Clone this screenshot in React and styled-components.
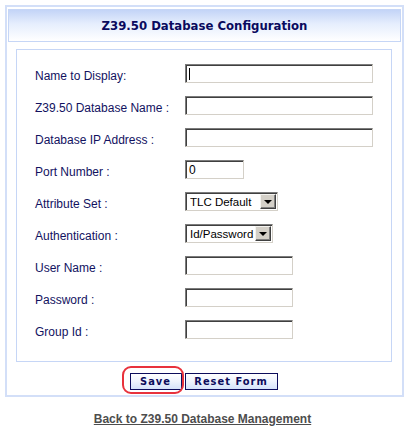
import React from 'react'
import styled, { createGlobalStyle } from 'styled-components'

const GlobalStyle = createGlobalStyle`
  body {
    margin: 0;
    background: #ffffff;
    font-family: "Liberation Sans", Arial, sans-serif;
  }
`

const Page = styled.div`
  width: 411px;
  padding-top: 5px;
`

const Frame = styled.div`
  margin-left: 5px;
  width: 393px;
  border: 2px solid #d3dff8;
  padding: 2px 1px 5px 1px;
`

const Header = styled.div`
  height: 31px;
  border: 1px solid #c6d6f6;
  background: linear-gradient(to bottom, #c3d4f7 0%, #e6eefd 45%, #ffffff 100%);
  display: flex;
  align-items: center;
  justify-content: center;
`

const Title = styled.h1`
  margin: 0;
  font-family: "DejaVu Sans Condensed", "DejaVu Sans", sans-serif;
  font-weight: bold;
  font-size: 13px;
  color: #0a0a5e;
`

const Panel = styled.div`
  margin: 7px 9px 0 8px;
  border: 1px solid #c6d6f6;
  padding: 14px 18px 23px 18px;
  display: grid;
  grid-template-columns: 150px 1fr;
  grid-auto-rows: 18px;
  row-gap: 14px;
  align-items: center;
`

const Label = styled.label`
  font-size: 12px;
  color: #12125f;
  white-space: nowrap;
  padding-top: 6px;
`

const Field = styled.div`
  display: flex;
  align-items: center;
  height: 18px;
`

const TextBox = styled.div`
  box-sizing: border-box;
  width: ${({ $w }) => $w}px;
  height: 19px;
  border: 1px solid;
  border-color: #7c7c7c #d4d0c8 #d4d0c8 #7c7c7c;
  box-shadow: inset 1px 1px 0 #404040;
  background: #fff;
  padding: 2px 0 0 3px;
  font-size: 12px;
  color: #000;
  position: relative;
`

const Caret = styled.span`
  position: absolute;
  left: 3px;
  top: 3px;
  width: 1px;
  height: 12px;
  background: #000;
`

const SelectBox = styled.div`
  box-sizing: border-box;
  width: ${({ $w }) => $w}px;
  height: 19px;
  border: 1px solid;
  border-color: #7c7c7c #d4d0c8 #d4d0c8 #7c7c7c;
  box-shadow: inset 1px 1px 0 #404040;
  background: #fff;
  display: flex;
  align-items: center;
  padding: 1px 1px 0 4px;
  font-size: 11.5px;
  color: #000;
`

const SelectValue = styled.span`
  flex: 1;
  min-width: 0;
  overflow: hidden;
  white-space: nowrap;
`

const ArrowButton = styled.span`
  box-sizing: border-box;
  flex-shrink: 0;
  width: 16px;
  height: 15px;
  background: #d4d0c8;
  border: 1px solid;
  border-color: #f4f3ef #404040 #404040 #f4f3ef;
  box-shadow: inset -1px -1px 0 #808080;
  display: flex;
  align-items: center;
  justify-content: center;
  &::after {
    content: '';
    border-left: 4px solid transparent;
    border-right: 4px solid transparent;
    border-top: 4px solid #000;
    margin-top: 1px;
  }
`

const ButtonRow = styled.div`
  display: flex;
  justify-content: center;
  gap: 3px;
  margin-top: 11px;
  padding-right: 2px;
`

const Highlight = styled.span`
  position: relative;
  display: inline-flex;
  &::before {
    content: '';
    position: absolute;
    left: -8px;
    right: -2px;
    top: -7px;
    bottom: -4px;
    border: 2px solid #e8323c;
    border-radius: 9px;
    pointer-events: none;
  }
`

const Button = styled.button`
  box-sizing: border-box;
  width: ${({ $w }) => $w}px;
  height: 17px;
  border: 1px solid #0c0c5c;
  background: linear-gradient(to bottom, #ffffff 0%, #eef3fd 50%, #d5e2fa 100%);
  font-family: "DejaVu Sans Condensed", "DejaVu Sans", sans-serif;
  font-weight: bold;
  font-size: 11px;
  letter-spacing: 1px;
  color: #0c0c5c;
  padding: 0;
  line-height: 15px;
`

const Footer = styled.div`
  text-align: center;
  margin-top: 12px;
  padding-right: 6px;
`

const BackLink = styled.a`
  font-family: "Liberation Sans", Arial, sans-serif;
  font-weight: bold;
  font-size: 12px;
  color: #4d4d4d;
  text-decoration: underline;
`

const rows = [
  { label: 'Name to Display:', type: 'text', w: 188, caret: true },
  { label: 'Z39.50 Database Name :', type: 'text', w: 188 },
  { label: 'Database IP Address :', type: 'text', w: 188 },
  { label: 'Port Number :', type: 'text', w: 59, value: '0' },
  { label: 'Attribute Set :', type: 'select', w: 93, value: 'TLC Default' },
  { label: 'Authentication :', type: 'select', w: 88, value: 'Id/Password' },
  { label: 'User Name :', type: 'text', w: 108 },
  { label: 'Password :', type: 'text', w: 108 },
  { label: 'Group Id :', type: 'text', w: 108 },
]

const App = () => (
  <Page>
    <GlobalStyle />
    <Frame>
      <Header>
        <Title>Z39.50 Database Configuration</Title>
      </Header>
      <Panel>
        {rows.map((r) => (
          <React.Fragment key={r.label}>
            <Label>{r.label}</Label>
            <Field>
              {r.type === 'select' ? (
                <SelectBox $w={r.w}>
                  <SelectValue>{r.value}</SelectValue>
                  <ArrowButton />
                </SelectBox>
              ) : (
                <TextBox $w={r.w}>
                  {r.caret && <Caret />}
                  {r.value}
                </TextBox>
              )}
            </Field>
          </React.Fragment>
        ))}
      </Panel>
      <ButtonRow>
        <Highlight>
          <Button $w={52}>Save</Button>
        </Highlight>
        <Button $w={93}>Reset Form</Button>
      </ButtonRow>
    </Frame>
    <Footer>
      <BackLink href="#">Back to Z39.50 Database Management</BackLink>
    </Footer>
  </Page>
)

export default App
